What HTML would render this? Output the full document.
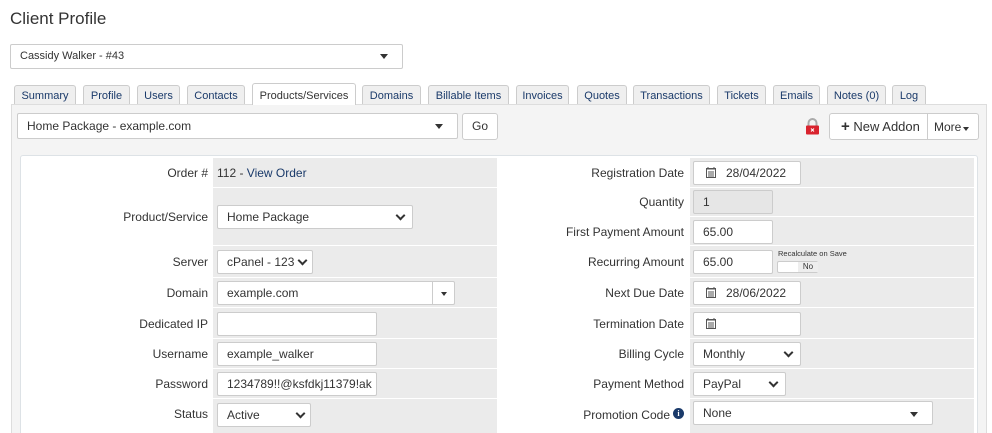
<!DOCTYPE html>
<html><head><meta charset="utf-8"><style>
*{box-sizing:border-box;margin:0;padding:0}
html,body{width:992px;height:433px;overflow:hidden}
body{background:#fff;font-family:"Liberation Sans",sans-serif;font-size:12px;color:#333;position:relative}
.a{position:absolute}
.tab{position:absolute;top:85px;height:19px;border:1px solid #ccc;border-bottom:none;background:#efefef;border-radius:3px 3px 0 0;font-size:11px;color:#1a3a6a;text-align:center;line-height:20px}
.tab.act{background:#fff;top:83px;height:22px;color:#333;line-height:24px;z-index:3}
.inp{position:absolute;background:#fff;border:1px solid #ccc;border-radius:2px;height:24px;line-height:22px;padding-left:9px;font-size:12px;color:#333}
.lbl{position:absolute;text-align:right;font-size:12px;color:#333}
.cell{position:absolute;background:#ebebeb}
.chev{position:absolute;right:6px;top:7px;width:7px;height:7px;border-right:2px solid #333;border-bottom:2px solid #333;transform:rotate(45deg)}
.caret{position:absolute;width:0;height:0;border-left:4px solid transparent;border-right:4px solid transparent;border-top:5px solid #333}
.cal{display:inline-block;vertical-align:-1px;margin-right:10px}
</style></head><body>
<div class="a" style="left:10px;top:9px;font-size:17px;color:#333">Client Profile</div>
<div class="inp" style="left:10px;top:44px;width:393px;height:25px;font-size:11px;line-height:23px">Cassidy Walker - #43<span class="caret" style="right:14px;top:9px"></span></div>

<div class="tab" style="left:14px;width:62px">Summary</div>
<div class="tab" style="left:83px;width:47px">Profile</div>
<div class="tab" style="left:137px;width:43px">Users</div>
<div class="tab" style="left:187px;width:58px">Contacts</div>
<div class="tab act" style="left:252px;width:104px">Products/Services</div>
<div class="tab" style="left:362px;width:59px">Domains</div>
<div class="tab" style="left:428px;width:81px">Billable Items</div>
<div class="tab" style="left:516px;width:53px">Invoices</div>
<div class="tab" style="left:577px;width:50px">Quotes</div>
<div class="tab" style="left:633px;width:77px">Transactions</div>
<div class="tab" style="left:717px;width:49px">Tickets</div>
<div class="tab" style="left:773px;width:47px">Emails</div>
<div class="tab" style="left:827px;width:59px">Notes (0)</div>
<div class="tab" style="left:892px;width:34px">Log</div>

<div class="a" style="left:11px;top:104px;width:976px;height:340px;background:#f4f4f4;border:1px solid #ddd"></div>
<div class="inp" style="left:17px;top:113px;width:441px;height:26px;line-height:24px">Home Package - example.com<span class="caret" style="right:14px;top:10px"></span></div>
<div class="inp" style="left:462px;top:113px;width:36px;height:27px;line-height:25px;padding:0;text-align:center;border-radius:3px">Go</div>
<svg class="a" style="left:805px;top:118px" width="15" height="17" viewBox="0 0 15 17"><path d="M3.5 8V5a4 4 0 0 1 8 0v3" fill="none" stroke="#aaa" stroke-width="2"/><rect x="1" y="7.5" width="13" height="9" rx="1" fill="#d9232e"/><path d="M6 10.5l3 3M9 10.5l-3 3" stroke="#fff" stroke-width="1"/></svg>
<div class="inp" style="left:829px;top:113px;width:150px;height:27px;border-radius:3px;padding:0"></div>
<div class="a" style="left:927px;top:113px;width:1px;height:27px;background:#ccc"></div>
<div class="a" style="left:841px;top:119px;font-size:13px;color:#333"><b style="font-size:15px;line-height:13px">+</b> New Addon</div>
<div class="a" style="left:934px;top:120px;font-size:12px">More</div>
<span class="caret" style="left:963px;top:127px;border-width:4px 3.5px 0 3.5px"></span>

<div class="a" style="left:20px;top:155px;width:958px;height:290px;background:#fff;border:1px solid #dde2e6;border-radius:3px"></div>

<div class="cell" style="left:213px;top:158px;width:284px;height:29px"></div>
<div class="cell" style="left:213px;top:188px;width:284px;height:57px"></div>
<div class="cell" style="left:213px;top:246px;width:284px;height:31px"></div>
<div class="cell" style="left:213px;top:278px;width:284px;height:29px"></div>
<div class="cell" style="left:213px;top:308px;width:284px;height:30px"></div>
<div class="cell" style="left:213px;top:339px;width:284px;height:29px"></div>
<div class="cell" style="left:213px;top:369px;width:284px;height:29px"></div>
<div class="cell" style="left:213px;top:399px;width:284px;height:40px"></div>
<div class="cell" style="left:690px;top:158px;width:284px;height:29px"></div>
<div class="cell" style="left:690px;top:188px;width:284px;height:28px"></div>
<div class="cell" style="left:690px;top:217px;width:284px;height:28px"></div>
<div class="cell" style="left:690px;top:246px;width:284px;height:31px"></div>
<div class="cell" style="left:690px;top:278px;width:284px;height:29px"></div>
<div class="cell" style="left:690px;top:308px;width:284px;height:30px"></div>
<div class="cell" style="left:690px;top:339px;width:284px;height:29px"></div>
<div class="cell" style="left:690px;top:369px;width:284px;height:29px"></div>
<div class="cell" style="left:690px;top:399px;width:284px;height:40px"></div>

<div class="lbl" style="left:30px;width:178px;top:166px">Order #</div>
<div class="a" style="left:217px;top:166px">112 - <span style="color:#1a3a6a">View Order</span></div>
<div class="lbl" style="left:30px;width:178px;top:210px">Product/Service</div>
<div class="inp" style="left:217px;top:205px;width:196px">Home Package<span class="chev" style="right:8px;top:6px"></span></div>
<div class="lbl" style="left:30px;width:178px;top:255px">Server</div>
<div class="inp" style="left:217px;top:250px;width:96px">cPanel - 123<span class="chev" style="top:6px"></span></div>
<div class="lbl" style="left:30px;width:178px;top:286px">Domain</div>
<div class="inp" style="left:217px;top:281px;width:238px">example.com<span class="a" style="left:214px;top:0;width:1px;height:22px;background:#ccc"></span><span class="caret" style="right:7px;top:10px;border-width:4px 3.5px 0 3.5px"></span></div>
<div class="lbl" style="left:30px;width:178px;top:317px">Dedicated IP</div>
<div class="inp" style="left:217px;top:312px;width:160px"></div>
<div class="lbl" style="left:30px;width:178px;top:347px">Username</div>
<div class="inp" style="left:217px;top:342px;width:160px">example_walker</div>
<div class="lbl" style="left:30px;width:178px;top:377px">Password</div>
<div class="inp" style="left:217px;top:372px;width:160px">1234789!!@ksfdkj11379!ak</div>
<div class="lbl" style="left:30px;width:178px;top:407px">Status</div>
<div class="inp" style="left:217px;top:403px;width:94px">Active<span class="chev" style="top:6px"></span></div>

<div class="lbl" style="left:500px;width:184px;top:166px">Registration Date</div>
<div class="inp" style="left:693px;top:161px;width:108px;padding-left:12px"><svg class="cal" width="10" height="11" viewBox="0 0 10 11"><rect x="0.5" y="1.5" width="9" height="9" fill="none" stroke="#555"/><path d="M0.5 2h9M2 0v2M8 0v2M2 5h6M2 7h6M2 9h6" stroke="#555" stroke-width="1"/></svg>28/04/2022</div>
<div class="lbl" style="left:500px;width:184px;top:195px">Quantity</div>
<div class="inp" style="left:693px;top:190px;width:80px;background:#e6e6e6">1</div>
<div class="lbl" style="left:500px;width:184px;top:225px">First Payment Amount</div>
<div class="inp" style="left:693px;top:220px;width:80px">65.00</div>
<div class="lbl" style="left:500px;width:184px;top:255px">Recurring Amount</div>
<div class="inp" style="left:693px;top:250px;width:80px">65.00</div>
<div class="a" style="left:778px;top:249px;font-size:7.5px;color:#333">Recalculate on Save</div>
<div class="a" style="left:777px;top:261px;width:41px;height:12px;border:1px solid #ccc;border-radius:2px;background:#fff"><span class="a" style="left:20px;top:0;width:20px;height:10px;background:#eee;font-size:8px;text-align:center;line-height:10px">No</span></div>
<div class="lbl" style="left:500px;width:184px;top:286px">Next Due Date</div>
<div class="inp" style="left:693px;top:281px;width:108px;padding-left:12px"><svg class="cal" width="10" height="11" viewBox="0 0 10 11"><rect x="0.5" y="1.5" width="9" height="9" fill="none" stroke="#555"/><path d="M0.5 2h9M2 0v2M8 0v2M2 5h6M2 7h6M2 9h6" stroke="#555" stroke-width="1"/></svg>28/06/2022</div>
<div class="lbl" style="left:500px;width:184px;top:317px">Termination Date</div>
<div class="inp" style="left:693px;top:312px;width:108px;padding-left:12px"><svg class="cal" width="10" height="11" viewBox="0 0 10 11"><rect x="0.5" y="1.5" width="9" height="9" fill="none" stroke="#555"/><path d="M0.5 2h9M2 0v2M8 0v2M2 5h6M2 7h6M2 9h6" stroke="#555" stroke-width="1"/></svg></div>
<div class="lbl" style="left:500px;width:184px;top:347px">Billing Cycle</div>
<div class="inp" style="left:693px;top:342px;width:108px">Monthly<span class="chev" style="top:6px;right:8px"></span></div>
<div class="lbl" style="left:500px;width:184px;top:377px">Payment Method</div>
<div class="inp" style="left:693px;top:372px;width:93px">PayPal<span class="chev" style="top:6px;right:8px"></span></div>
<div class="lbl" style="left:500px;width:170px;top:408px">Promotion Code</div>
<div class="a" style="left:673px;top:408px;width:11px;height:11px;border-radius:50%;background:#1a3a6a;color:#fff;font-size:8px;font-weight:bold;text-align:center;line-height:11px;font-family:'Liberation Serif',serif">i</div>
<div class="inp" style="left:693px;top:401px;width:240px">None<span class="caret" style="right:14px;top:10px"></span></div>
</body></html>
